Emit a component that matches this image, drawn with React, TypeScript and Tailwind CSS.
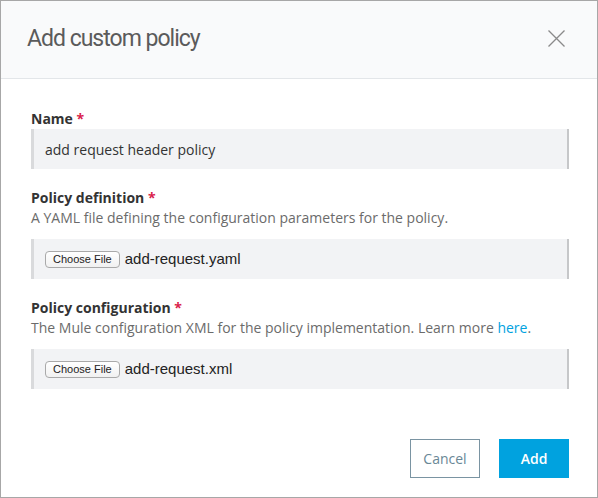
import type { ReactNode } from "react";

const body = { fontFamily: '"Open Sans", "Liberation Sans", sans-serif' };

function Label({ children }: { children: ReactNode }) {
  return (
    <div className="text-[14px] leading-[20px] font-bold text-[#333333]">
      {children} <span className="text-[#d9224b]">*</span>
    </div>
  );
}

function FileField({ file }: { file: string }) {
  return (
    <div className="flex h-[40px] items-center border-l-[3px] border-r-2 border-l-[#d9dadc] border-r-[#c6c7c9] bg-[#f2f3f5] pl-[11px]">
      <span
        className="flex h-[17px] items-center rounded-[4px] border border-[#a9a9a9] bg-gradient-to-b from-white to-[#f1f1f1] px-[7px] text-[11px] text-[#222222]"
        style={{ fontFamily: '"Liberation Sans", Arial, sans-serif' }}
      >
        Choose File
      </span>
      <span
        className="ml-[5px] text-[15px] text-[#222222]"
        style={{ fontFamily: '"Liberation Sans", Arial, sans-serif' }}
      >
        {file}
      </span>
    </div>
  );
}

export default function App() {
  return (
    <div
      className="flex h-[498px] w-[598px] flex-col border border-[#a7a7a7] bg-white"
      style={body}
    >
      <div className="flex h-[78px] items-center justify-between border-b border-[#e3e6e9] bg-[#f9fafb] pl-[26px] pr-[32px]">
        <h1
          className="text-[23px] font-normal tracking-[-1px] text-[#5b5b5b]"
          style={{ fontFamily: 'Roboto, "Liberation Sans", sans-serif' }}
        >
          Add custom policy
        </h1>
        <svg width="17" height="17" viewBox="0 0 17 17" className="-mt-[2px]">
          <path d="M0.5 0.5 L16.5 16.5 M16.5 0.5 L0.5 16.5" stroke="#8a8a8a" strokeWidth="1.3" fill="none" />
        </svg>
      </div>

      <div className="flex flex-col pl-[30px] pr-[28px] pt-[30px]">
        <Label>Name</Label>
        <div className="flex h-[40px] items-center border-l-[3px] border-r-2 border-l-[#d9dadc] border-r-[#c6c7c9] bg-[#f2f3f5] pl-[11px] text-[14px] text-[#333333]">
          add request header policy
        </div>

        <div className="mt-[19px]">
          <Label>Policy definition</Label>
          <p className="text-[14px] leading-[20px] text-[#6b6b6b]">
            A YAML file defining the configuration parameters for the policy.
          </p>
        </div>
        <div className="mt-[11px]">
          <FileField file="add-request.yaml" />
        </div>

        <div className="mt-[19px]">
          <Label>Policy configuration</Label>
          <p className="text-[14px] leading-[20px] text-[#6b6b6b]">
            The Mule configuration XML for the policy implementation. Learn more{" "}
            <a className="text-[#00a2df]">here</a>.
          </p>
        </div>
        <div className="mt-[11px]">
          <FileField file="add-request.xml" />
        </div>

        <div className="mt-[50px] flex justify-end gap-[19px]">
          <button
            type="button"
            className="h-[39px] w-[70px] border border-[#7a94a2] bg-white text-[14px] text-[#6a8796]"
          >
            Cancel
          </button>
          <button
            type="button"
            className="h-[39px] w-[70px] bg-[#00a2df] text-[14px] font-semibold text-white"
          >
            Add
          </button>
        </div>
      </div>
    </div>
  );
}
